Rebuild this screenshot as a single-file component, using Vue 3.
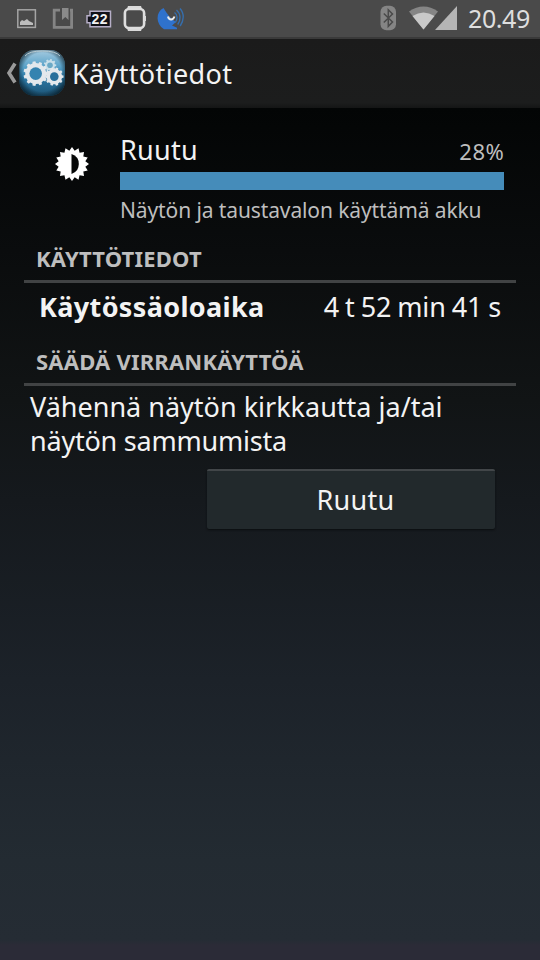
<script setup>
const percent = 28
const gear = (cx, cy, r, n, depth) => {
  const pts = []
  for (let i = 0; i < n; i++) {
    const step = (Math.PI * 2) / n
    for (const [off, rad] of [[-0.3, r], [-0.2, r + depth], [0.2, r + depth], [0.3, r]]) {
      const a = (i + off) * step
      pts.push(`${(cx + rad * Math.cos(a)).toFixed(2)},${(cy + rad * Math.sin(a)).toFixed(2)}`)
    }
  }
  return pts.join(' ')
}
const sun = Array.from({ length: 32 }, (_, i) => {
  const r = i % 2 ? 13.6 : 17
  const a = (i * Math.PI) / 16 - Math.PI / 2
  return `${(18 + r * Math.cos(a)).toFixed(2)},${(18 + r * Math.sin(a)).toFixed(2)}`
}).join(' ')
</script>

<template>
  <div class="screen">
    <header class="status">
      <svg class="tray" width="200" height="37" viewBox="0 0 200 37">
        <rect x="17.8" y="9.8" width="17.6" height="17.6" fill="none" stroke="#a5a5a5" stroke-width="1.5" />
        <path d="M20 25v-3l2-2 2 1 3-2 2 2 4 2v2z" fill="#bdbdbd" />
        <path d="M60 10.2H54.2V27.3H71.6V10.2H70" fill="none" stroke="#858585" stroke-width="2.8" />
        <path d="M62 8h6.500v12l-3.200-3-3.300 3z" fill="#8a8a8a" />
        <path d="M90 11.300h20.500v15.400H90v-4h-3v-7h3z" fill="#111118" stroke="#b7afc8" stroke-width="1.500" />
        <text x="91.500" y="23.800" class="count" textLength="16">22</text>
        <path d="M128 6h13l1.500 4h-16zM128 31h13l1.500-4h-16z" fill="#d9d9d9" />
        <rect x="124.900" y="9" width="19.200" height="19" rx="4" fill="#4a4a4a" stroke="#dedede" stroke-width="2.600" />
        <path d="M145 16v5" stroke="#d9d9d9" stroke-width="2" />
        <path d="M163.500 8C155.500 12 155.500 24 164 29.300H177V27.800L172 25.500 176 22C171 19 167 14 163.500 8z" fill="#2f72cc" />
        <path d="M168 16.500c1 4 5 4 6.500 0" fill="none" stroke="#eee" stroke-width="2" />
        <path d="M174.500 12.500c3.500 2.500 3 7 .8 10M176.500 10c4.500 4 4.500 10 1.200 14.500M180 8.500c4.500 5 4 12 .2 17.500" fill="none" stroke="#356ead" stroke-width="1.400" />
      </svg>
      <div class="system">
        <svg width="84" height="37" viewBox="0 0 84 37">
          <rect x="5.500" y="5.700" width="15.500" height="24.600" rx="6" fill="#858585" />
          <path d="M8.800 13.500l8.700 8.500-4.200 4.300V9.800l4.200 4.200-8.700 8.500" fill="none" stroke="#4a4a4a" stroke-width="1.500" />
          <path d="M34 11.500Q48.500 1.500 63 11.500L48.500 29.500z" fill="#858585" />
          <path d="M37.500 16Q48.500 9 59.500 16L48.500 29.500z" fill="#c9c9c9" />
          <path d="M60 30L82 6V30z" fill="#b5b5b5" />
        </svg>
        <span class="clock">20.49</span>
      </div>
    </header>

    <nav class="actionbar">
      <svg width="66" height="69" viewBox="0 0 66 69">
        <defs>
          <linearGradient id="tile" x1="0" y1="0" x2="0" y2="1">
            <stop offset="0" stop-color="#a5cbe0" />
            <stop offset=".35" stop-color="#5ba3c9" />
            <stop offset=".6" stop-color="#2b78a5" />
            <stop offset="1" stop-color="#1d5577" />
          </linearGradient>
          <radialGradient id="shade" cx=".5" cy=".48" r=".6">
            <stop offset=".7" stop-color="#071b26" stop-opacity="0" />
            <stop offset="1" stop-color="#071b26" stop-opacity=".9" />
          </radialGradient>
        </defs>
        <path d="M15 24.500L9 34l6 9.500" fill="none" stroke="#9a9a9a" stroke-width="3.600" />
        <rect x="19.500" y="11" width="45.500" height="46" rx="15" fill="url(#tile)" />
        <rect x="19.500" y="11" width="45.500" height="46" rx="15" fill="url(#shade)" />
        <path d="M25 17q4-5 17.500-5T60 17" fill="none" stroke="#b8cbd2" stroke-width="1" />
        <polygon :points="gear(50, 26.3, 5, 9, 1.3)" fill="#c9dfe9" />
        <circle cx="50" cy="26.300" r="2.800" fill="#6aa9c6" />
        <polygon :points="gear(35.7, 34.6, 10.5, 11, 1.8)" fill="#e3e8ec" />
        <circle cx="35.700" cy="34.600" r="6.300" fill="#3483b0" />
        <polygon :points="gear(54.3, 37.6, 7.8, 10, 1.5)" fill="#e3e8ec" />
        <circle cx="54.300" cy="37.600" r="4.300" fill="#286f9b" />
      </svg>
      <h1><span>Käyttötiedot</span></h1>
    </nav>

    <main>
      <section class="summary">
        <svg class="brightness" width="36" height="36" viewBox="0 0 36 36">
          <polygon :points="sun" fill="#fff" />
          <path d="M17.500 8a10.500 10.500 0 0 1 0 20z" fill="#050707" />
        </svg>
        <div class="usage">
          <div class="row"><span class="name">Ruutu</span><span class="percent">{{ percent }}%</span></div>
          <div class="bar"></div>
          <p class="desc"><span>Näytön ja taustavalon käyttämä akku</span></p>
        </div>
      </section>
      <h2><span class="head-a">KÄYTTÖTIEDOT</span></h2>
      <div class="detail"><b>Käytössäoloaika</b><span class="time">4 t 52 min 41 s</span></div>
      <h2><span class="head-b">SÄÄDÄ VIRRANKÄYTTÖÄ</span></h2>
      <p class="hint"><span class="hint-a">Vähennä näytön kirkkautta ja/tai</span><br><span class="hint-b">näytön sammumista</span></p>
      <button type="button"><span class="name">Ruutu</span></button>
    </main>
  </div>
</template>

<style>
body { background: #050707; }
</style>

<style scoped>
.screen {
  height: 960px;
  display: flex;
  flex-direction: column;
  overflow: hidden;
  font-family: "Noto Sans", sans-serif;
  color: #f3f3f3;
  white-space: nowrap;
  background: linear-gradient(#030505 108px, #0a0c0d 250px, #111415 400px, #15191d 500px, #1c2229 680px, #232b32 860px, #252c34 940px, #2b2b37 945px, #2b2b37);
}
svg { display: block; flex: none; }
.status {
  height: 39px;
  box-sizing: border-box;
  border-bottom: 2px solid #3a3a3a;
  background: #4a4a4a;
  display: flex;
  justify-content: space-between;
}
.count { font: bold 14px "Liberation Sans", sans-serif; fill: #f1f1f1; }
.system { display: flex; width: 165px; }
.clock { margin-left: 9px; font-size: 25px; line-height: 37px; letter-spacing: -0.4px; color: #dedede; }
.actionbar {
  height: 69px;
  display: flex;
  background: linear-gradient(#1b1b1b, #1c1d1d 64px, #141515);
}
h1 { margin: 0 0 0 6px; font-size: 27px; font-weight: 400; line-height: 69px; letter-spacing: 0.35px; }
main { display: flex; flex-direction: column; padding: 24px 24px 0; }
.summary { display: flex; padding: 0 12px 0 30px; }
.brightness { margin-top: 14px; }
.usage { margin-left: 30px; flex: 1; }
.row { display: flex; justify-content: space-between; line-height: 36px; font-size: 27px; }
.name { letter-spacing: 0.3px; }
.percent { font-size: 22px; letter-spacing: 0.6px; margin-right: -0.5px; color: #bebebe; line-height: 38px; height: 36px; }
.bar { height: 18px; margin-top: 4px; background: #458cba; }
.desc { margin: 6px 0 0; font-size: 21px; line-height: 28px; letter-spacing: -0.11px; color: #bebebe; }
h2 {
  margin: 20px 0 0;
  height: 36px;
  padding-left: 12px;
  border-bottom: 3px solid #414344;
  font-size: 22px;
  line-height: 28px;
  letter-spacing: 0.2px;
  color: #bebebe;
}
.detail {
  display: flex;
  justify-content: space-between;
  padding: 6px 15px 2px;
  font-size: 27px;
  line-height: 36px;
}
.detail b { letter-spacing: 0.35px; }
.time { word-spacing: -0.9px; letter-spacing: -0.15px; }
.hint { margin: 4px 0 0 6px; font-size: 27px; line-height: 34px; }
.hint-b { letter-spacing: -0.22px; }
button {
  margin: 11px 21px 0 0;
  align-self: flex-end;
  width: 288px;
  height: 60px;
  padding: 0 0 2px 9px;
  border: 0;
  border-top: 2px solid #424649;
  border-radius: 2px;
  background: #22292c;
  color: #f3f3f3;
  font: 27px "Noto Sans", sans-serif;
  box-shadow: 0 1px 2px #0b0e10;
}
</style>
